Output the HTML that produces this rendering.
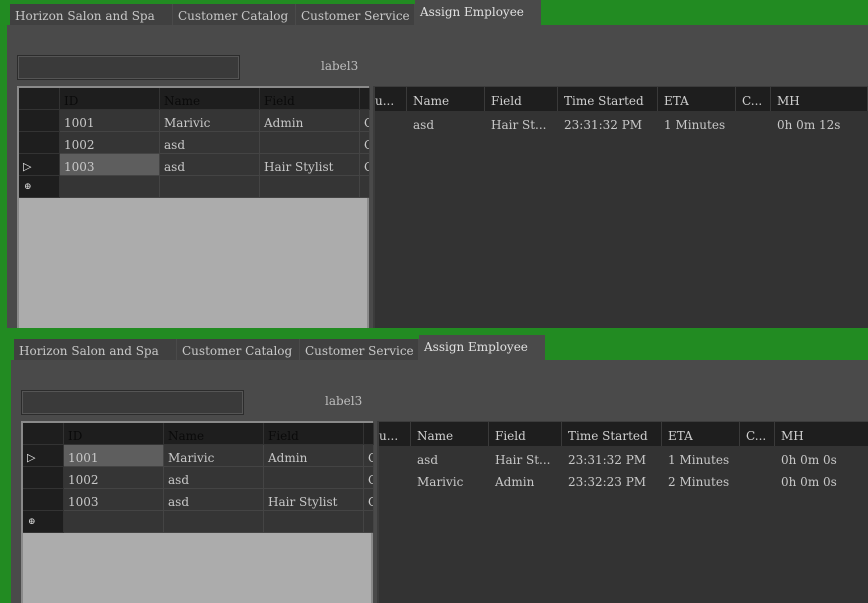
<!DOCTYPE html>
<html style="overflow:hidden"><head><meta charset="utf-8"><style>
*{margin:0;padding:0;box-sizing:border-box}
html,body{width:868px;height:603px;overflow:hidden}
body{background:#228b22;position:relative;font-family:"DejaVu Serif","Liberation Serif",serif;font-size:12px;color:#c8c8c8}
.wrap{position:absolute;overflow:hidden}
.p{position:absolute;left:0;top:0;width:880px;height:400px}
.a{position:absolute;white-space:nowrap}
.tab{position:absolute;top:4px;height:21px;background:#404040;color:#c8c8c8;padding:5px 0 0 5px;border-right:1px solid #4a4a4a;white-space:nowrap;overflow:hidden}
.tab.act{top:0;height:25px;background:#4a4a4a;color:#e0e0e0;padding-top:5px}
.content{position:absolute;left:7px;top:25px;width:880px;height:400px;background:#4a4a4a}
.tb{left:17px;top:55px;width:223px;height:25px;background:#3a3a3a;border:1px solid #2c2c2c;box-shadow:inset 0 0 0 1px #555}
.lg{left:17px;top:86px;width:352px;height:320px;background:#acacac;border:2px solid #8a8a8a;border-bottom:none}
.c{position:absolute;height:22px;background:#353535;border-right:1px solid #444;border-bottom:1px solid #444;padding:6px 0 0 4px;overflow:hidden;white-space:nowrap}
.h{background:#1e1e1e;color:#0a0a0a;border-color:#333}
.rh{background:#1e1e1e;border-color:#333}
.rg{left:373px;top:86px;width:500px;height:320px;background:#333;border-left:2px solid #3c3c3c;border-top:1px solid #3c3c3c}
.rc{position:absolute;top:0;height:24px;background:#1e1e1e;border-right:1px solid #3a3a3a;padding:7px 0 0 6px;color:#d0d0d0;overflow:hidden;white-space:nowrap}
</style></head><body>

<!-- TOP -->
<div class="wrap" style="left:0;top:0;width:868px;height:328px">
<div class="p">
<div class="tab" style="left:10px;width:163px">Horizon Salon and Spa</div>
<div class="tab" style="left:173px;width:123px">Customer Catalog</div>
<div class="tab" style="left:296px;width:119px">Customer Service</div>
<div class="tab act" style="left:415px;width:126px">Assign Employee</div>
<div class="content"></div>
<div class="a tb"></div>
<div class="a" style="left:321px;top:59px;color:#bdbdbd">label3</div>
<div class="a lg">
 <div class="c h" style="left:0;top:0;width:41px"></div>
 <div class="c h" style="left:41px;top:0;width:100px">ID</div>
 <div class="c h" style="left:141px;top:0;width:100px">Name</div>
 <div class="c h" style="left:241px;top:0;width:100px">Field</div>
 <div class="c h" style="left:341px;top:0;width:10px"></div>
 <div class="c rh" style="left:0;top:22px;width:41px"></div>
 <div class="c" style="left:41px;top:22px;width:100px">1001</div>
 <div class="c" style="left:141px;top:22px;width:100px">Marivic</div>
 <div class="c" style="left:241px;top:22px;width:100px">Admin</div>
 <div class="c" style="left:341px;top:22px;width:10px">C</div>
 <div class="c rh" style="left:0;top:44px;width:41px"></div>
 <div class="c" style="left:41px;top:44px;width:100px">1002</div>
 <div class="c" style="left:141px;top:44px;width:100px">asd</div>
 <div class="c" style="left:241px;top:44px;width:100px"></div>
 <div class="c" style="left:341px;top:44px;width:10px">C</div>
 <div class="c rh" style="left:0;top:66px;width:41px;color:#eee;padding-left:4px;font-size:11px">▷</div>
 <div class="c" style="left:41px;top:66px;width:100px;background:#5e5e5e">1003</div>
 <div class="c" style="left:141px;top:66px;width:100px">asd</div>
 <div class="c" style="left:241px;top:66px;width:100px">Hair Stylist</div>
 <div class="c" style="left:341px;top:66px;width:10px">C</div>
 <div class="c rh" style="left:0;top:88px;width:41px;color:#ddd;font-size:9px;padding:6px 0 0 5px">⊕</div>
 <div class="c" style="left:41px;top:88px;width:100px"></div>
 <div class="c" style="left:141px;top:88px;width:100px"></div>
 <div class="c" style="left:241px;top:88px;width:100px"></div>
 <div class="c" style="left:341px;top:88px;width:10px"></div>
</div>
<div class="a rg">
 <div class="rc" style="left:0;width:32px;padding-left:0">u...</div>
 <div class="rc" style="left:32px;width:78px">Name</div>
 <div class="rc" style="left:110px;width:73px">Field</div>
 <div class="rc" style="left:183px;width:100px">Time Started</div>
 <div class="rc" style="left:283px;width:78px">ETA</div>
 <div class="rc" style="left:361px;width:35px">C...</div>
 <div class="rc" style="left:396px;width:97px">MH</div>
 <div class="a" style="left:38px;top:31px">asd</div>
 <div class="a" style="left:116px;top:31px">Hair St...</div>
 <div class="a" style="left:189px;top:31px">23:31:32 PM</div>
 <div class="a" style="left:289px;top:31px">1 Minutes</div>
 <div class="a" style="left:402px;top:31px">0h 0m 12s</div>
</div>
</div></div>

<!-- BOTTOM -->
<div class="wrap" style="left:4px;top:335px;width:864px;height:268px">
<div class="p">
<div class="tab" style="left:10px;width:163px">Horizon Salon and Spa</div>
<div class="tab" style="left:173px;width:123px">Customer Catalog</div>
<div class="tab" style="left:296px;width:119px">Customer Service</div>
<div class="tab act" style="left:415px;width:126px">Assign Employee</div>
<div class="content"></div>
<div class="a tb"></div>
<div class="a" style="left:321px;top:59px;color:#bdbdbd">label3</div>
<div class="a lg">
 <div class="c h" style="left:0;top:0;width:41px"></div>
 <div class="c h" style="left:41px;top:0;width:100px">ID</div>
 <div class="c h" style="left:141px;top:0;width:100px">Name</div>
 <div class="c h" style="left:241px;top:0;width:100px">Field</div>
 <div class="c h" style="left:341px;top:0;width:10px"></div>
 <div class="c rh" style="left:0;top:22px;width:41px;color:#eee;padding-left:4px;font-size:11px">▷</div>
 <div class="c" style="left:41px;top:22px;width:100px;background:#5e5e5e">1001</div>
 <div class="c" style="left:141px;top:22px;width:100px">Marivic</div>
 <div class="c" style="left:241px;top:22px;width:100px">Admin</div>
 <div class="c" style="left:341px;top:22px;width:10px">C</div>
 <div class="c rh" style="left:0;top:44px;width:41px"></div>
 <div class="c" style="left:41px;top:44px;width:100px">1002</div>
 <div class="c" style="left:141px;top:44px;width:100px">asd</div>
 <div class="c" style="left:241px;top:44px;width:100px"></div>
 <div class="c" style="left:341px;top:44px;width:10px">C</div>
 <div class="c rh" style="left:0;top:66px;width:41px"></div>
 <div class="c" style="left:41px;top:66px;width:100px">1003</div>
 <div class="c" style="left:141px;top:66px;width:100px">asd</div>
 <div class="c" style="left:241px;top:66px;width:100px">Hair Stylist</div>
 <div class="c" style="left:341px;top:66px;width:10px">C</div>
 <div class="c rh" style="left:0;top:88px;width:41px;color:#ddd;font-size:9px;padding:6px 0 0 5px">⊕</div>
 <div class="c" style="left:41px;top:88px;width:100px"></div>
 <div class="c" style="left:141px;top:88px;width:100px"></div>
 <div class="c" style="left:241px;top:88px;width:100px"></div>
 <div class="c" style="left:341px;top:88px;width:10px"></div>
</div>
<div class="a rg">
 <div class="rc" style="left:0;width:32px;padding-left:0">u...</div>
 <div class="rc" style="left:32px;width:78px">Name</div>
 <div class="rc" style="left:110px;width:73px">Field</div>
 <div class="rc" style="left:183px;width:100px">Time Started</div>
 <div class="rc" style="left:283px;width:78px">ETA</div>
 <div class="rc" style="left:361px;width:35px">C...</div>
 <div class="rc" style="left:396px;width:97px">MH</div>
 <div class="a" style="left:38px;top:31px">asd</div>
 <div class="a" style="left:116px;top:31px">Hair St...</div>
 <div class="a" style="left:189px;top:31px">23:31:32 PM</div>
 <div class="a" style="left:289px;top:31px">1 Minutes</div>
 <div class="a" style="left:402px;top:31px">0h 0m 0s</div>
 <div class="a" style="left:38px;top:53px">Marivic</div>
 <div class="a" style="left:116px;top:53px">Admin</div>
 <div class="a" style="left:189px;top:53px">23:32:23 PM</div>
 <div class="a" style="left:289px;top:53px">2 Minutes</div>
 <div class="a" style="left:402px;top:53px">0h 0m 0s</div>
</div>
</div></div>
</body></html>
